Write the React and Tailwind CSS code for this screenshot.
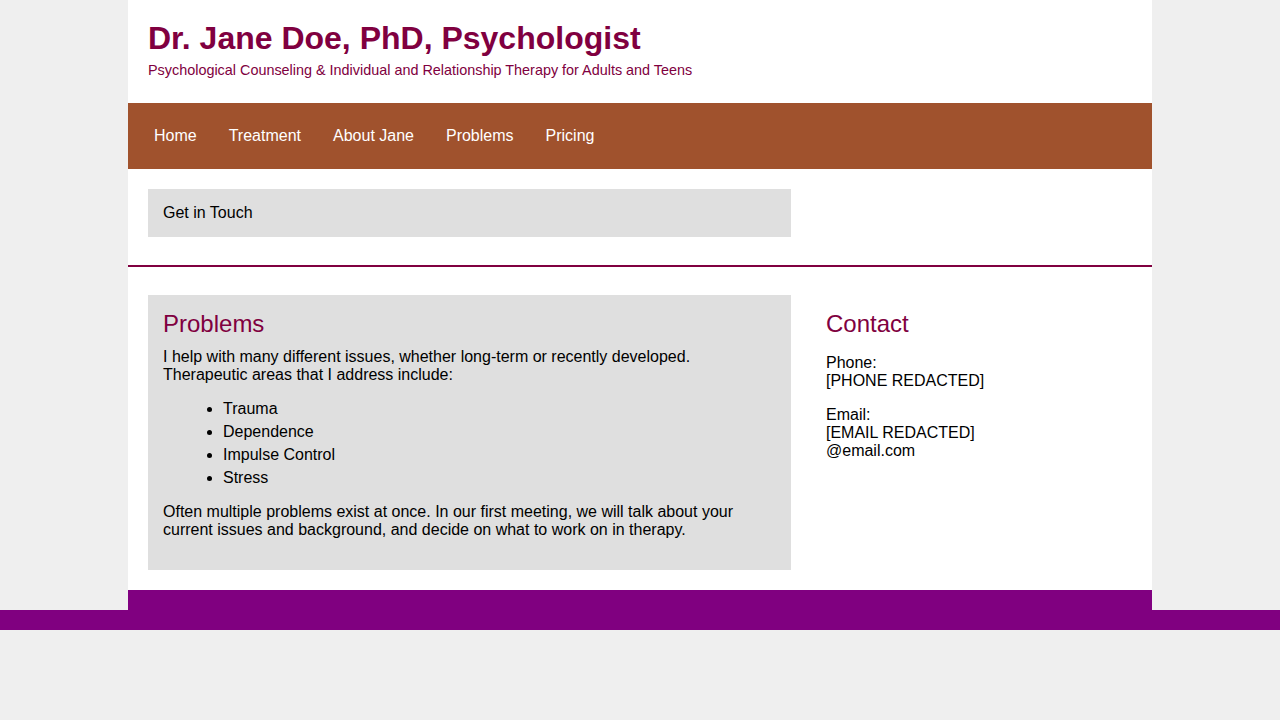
export default function App() {
  return (
    <div className="min-h-[720px] bg-[#efefef] font-['Liberation_Sans',Arial,sans-serif] text-black">
      <div className="mx-auto w-[1024px] bg-white">
        <header className="px-5 pt-[20px] pb-[25px]">
          <h1 className="text-[32px] font-bold leading-[37px] text-[#800040]">Dr. Jane Doe, PhD, Psychologist</h1>
          <p className="mt-[5px] text-[14.4px] leading-[16px] text-[#800040]">
            Psychological Counseling &amp; Individual and Relationship Therapy for Adults and Teens
          </p>
        </header>

        <nav className="flex h-[66px] items-center bg-[#a0522d] pl-[10px]">
          {["Home", "Treatment", "About Jane", "Problems", "Pricing"].map((item) => (
            <a key={item} className="px-4 text-[16px] leading-[18px] text-white">
              {item}
            </a>
          ))}
        </nav>

        <section className="border-b-2 border-[#800040] px-5 pt-5 pb-[28px]">
          <div className="w-[643px] bg-[#dfdfdf] px-[15px] py-[15px] text-[16px] leading-[18px]">Get in Touch</div>
        </section>

        <main className="flex px-5 pt-[28px] pb-5">
          <div className="w-[643px] bg-[#dfdfdf] px-[15px] pt-[15px] pb-[31px] text-[16px] leading-[18px]">
            <h2 className="text-[24px] leading-[27px] text-[#800040]">Problems</h2>
            <p className="mt-[11px]">
              I help with many different issues, whether long-term or recently developed.
              <br />
              Therapeutic areas that I address include:
            </p>
            <ul className="mt-[13px] mb-[14px] list-disc pl-[60px] leading-[23px]">
              <li>Trauma</li>
              <li>Dependence</li>
              <li>Impulse Control</li>
              <li>Stress</li>
            </ul>
            <p>
              Often multiple problems exist at once. In our first meeting, we will talk about your current issues and
              background, and decide on what to work on in therapy.
            </p>
          </div>

          <aside className="ml-5 w-[200px] px-[15px] pt-[15px] text-[16px] leading-[18px]">
            <h2 className="text-[24px] leading-[27px] text-[#800040]">Contact</h2>
            <p className="mt-[17px]">
              Phone:
              <br />
              [PHONE REDACTED]
            </p>
            <p className="mt-4">
              Email:
              <br />
              [EMAIL REDACTED]
              <br />
              @email.com
            </p>
          </aside>
        </main>

        <div className="h-5 bg-[#800080]" />
      </div>
      <footer className="h-5 bg-[#800080]" />
    </div>
  );
}
